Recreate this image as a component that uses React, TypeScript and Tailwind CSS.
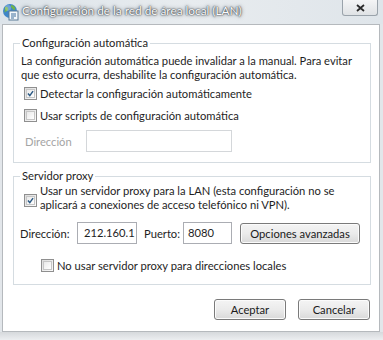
import React from 'react';

const font = { fontFamily: 'Lato, "Noto Sans", Arial, sans-serif' };

const Check = ({ checked = false }: { checked?: boolean }) => (
  <span className="flex h-[13px] w-[13px] shrink-0 items-center justify-center border border-[#8f8f8f] bg-gradient-to-br from-[#dcdcdc] to-[#fbfbfb]">
    <span className="flex h-[9px] w-[9px] items-center justify-center border border-[#c6c6c6] bg-gradient-to-br from-[#e9e9e9] to-[#ffffff]">
      {checked && (
        <svg width="9" height="9" viewBox="0 0 9 9">
          <path d="M1.2 4.6 L3.6 7.2 L7.8 1.4" fill="none" stroke="#2c5a84" strokeWidth="1.9" />
        </svg>
      )}
    </span>
  </span>
);

const Button = ({ label, className }: { label: string; className: string }) => (
  <div
    className={`flex h-[21px] items-center justify-center rounded-[3px] border border-[#7a7a7a] bg-gradient-to-b from-[#f4f4f4] via-[#ebebeb] to-[#d9d9d9] text-[#1a1a1a] shadow-[inset_0_0_0_1px_#fbfbfb] ${className}`}
  >
    {label}
  </div>
);

const Globe = () => (
  <svg width="17" height="18" viewBox="0 0 17 18">
    <circle cx="8" cy="8" r="7" fill="#3f86c8" />
    <path d="M3 4 C5 3 7 5 6 7 C5 9 3 8 2.5 10 Z" fill="#6fb34a" />
    <path d="M9 2 C12 2 14 5 13 7 C11 7 10 5 9 4 Z" fill="#6fb34a" />
    <circle cx="6" cy="5" r="3" fill="#ffffff" opacity="0.25" />
    <rect x="7" y="8" width="9" height="9" fill="#f5f8fb" stroke="#5a7a96" strokeWidth="1" />
    <path d="M9 11 H14 M9 13 H14 M9 15 H12" stroke="#3f6f9c" strokeWidth="1" />
  </svg>
);

export default function App() {
  return (
    <div className="h-[340px] w-[383px] overflow-hidden bg-[#e2e6ea] text-[11.2px] leading-[13px] text-[#1e1e1e]" style={font}>
      {/* title bar */}
      <div className="flex h-[24px] items-start bg-gradient-to-r from-[#dde4ea] via-[#e8ecef] to-[#dfe5ea]">
        <div className="ml-[2px] mt-[3px]">
          <Globe />
        </div>
        <div className="ml-[3px] mt-[3px] whitespace-nowrap text-[11.8px] leading-[16px] text-[#fbfcfd] [text-shadow:0_0_2px_#3c4248,0_0_4px_#5a6068,0_0_1px_#2c3238]">
          Configuración de la red de área local (LAN)
        </div>
        <div className="ml-auto mr-[5px] flex h-[16px] w-[36px] items-center justify-center rounded-b-[3px] border border-t-0 border-[#9aa3ab] bg-gradient-to-b from-[#f4f5f6] to-[#dfe2e5]">
          <svg width="9" height="8" viewBox="0 0 9 8">
            <path d="M1 1 L8 7 M8 1 L1 7" stroke="#2a2a2a" strokeWidth="1.8" />
          </svg>
        </div>
      </div>

      {/* dialog body */}
      <div className="ml-[2px] mr-[3px] flex h-[308px] flex-col whitespace-nowrap border border-[#b5b9bd] bg-white">
        <fieldset className="ml-[10px] mt-[10px] h-[128px] w-[358px] border border-[#d5dce1]">
          <legend className="ml-[6px] px-[2px] leading-[16px] text-[#1e1e1e]">Configuración automática</legend>
          <p className="ml-[7px] mt-[3px] leading-[13.5px]">
            La configuración automática puede invalidar a la manual. Para evitar
            <br />
            que esto ocurra, deshabilite la configuración automática.
          </p>
          <div className="ml-[10px] mt-[6px] flex items-center gap-[3px]">
            <Check checked />
            <span>Detectar la configuración automáticamente</span>
          </div>
          <div className="ml-[10px] mt-[9px] flex items-center gap-[3px]">
            <Check />
            <span>Usar scripts de configuración automática</span>
          </div>
          <div className="ml-[11px] mt-[8px] flex items-center">
            <span className="w-[61px] text-[#a4a4a4]">Dirección</span>
            <div className="h-[22px] w-[146px] border border-[#d4d7da] bg-white" />
          </div>
        </fieldset>

        <fieldset className="ml-[10px] mt-[5px] h-[117px] w-[358px] border border-[#d5dce1]">
          <legend className="ml-[6px] px-[2px] leading-[16px] text-[#1e1e1e]">Servidor proxy</legend>
          <div className="ml-[10px] flex items-start gap-[3px]">
            <div className="pt-[10px]">
              <Check checked />
            </div>
            <span className="leading-[13.5px]">
              Usar un servidor proxy para la LAN (esta configuración no se
              <br />
              aplicará a conexiones de acceso telefónico ni VPN).
            </span>
          </div>
          <div className="ml-[6px] mt-[11px] flex items-center">
            <span className="w-[57px]">Dirección:</span>
            <div className="h-[22px] w-[60px] overflow-hidden border border-[#abadb3] pl-[6px] leading-[20px]">
              212.160.1
            </div>
            <span className="ml-[7px] w-[39px]">Puerto:</span>
            <div className="h-[22px] w-[49px] border border-[#abadb3] pl-[4px] leading-[20px]">8080</div>
            <Button label="Opciones avanzadas" className="ml-[8px] w-[120px]" />
          </div>
          <div className="ml-[27px] mt-[15px] flex items-center gap-[3px]">
            <Check />
            <span>No usar servidor proxy para direcciones locales</span>
          </div>
        </fieldset>

        <div className="mt-[14px] flex justify-end gap-[12px] pr-[9px]">
          <Button label="Aceptar" className="w-[72px]" />
          <Button label="Cancelar" className="w-[72px]" />
        </div>
      </div>
      <div className="h-[8px] bg-gradient-to-b from-[#d6d9dc] to-[#eceef0]" />
    </div>
  );
}
